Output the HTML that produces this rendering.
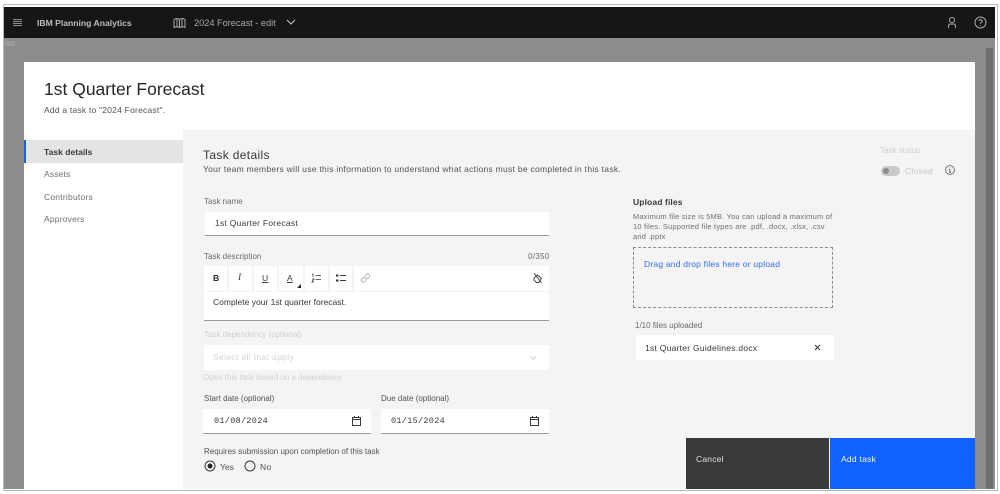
<!DOCTYPE html>
<html><head><meta charset="utf-8"><style>
html,body{margin:0;padding:0;background:#fff}
body{width:1000px;height:494px;position:relative;overflow:hidden;font-family:"Liberation Sans",sans-serif;color:#393939}
div,span.a,svg{position:absolute}
.t{white-space:nowrap;line-height:12px}
.l{font-size:8px;color:#6a6a6a;letter-spacing:0}
.d{font-size:8px;color:#d0d0d0;letter-spacing:0}
.f{background:#fff}
#w{left:0;top:0;width:1000px;height:494px;filter:blur(.3px);overflow:hidden}
</style></head><body><div id="w">
<div style="left:3px;top:4px;width:995px;height:487px;background:#b8b8b8"></div>
<div style="left:4px;top:5px;width:993px;height:485px;background:#fff"></div>
<div style="left:4px;top:7px;width:991px;height:482px;background:#8c8c8c"></div>
<div style="left:4px;top:7px;width:991px;height:31px;background:#161616"></div>
<div style="left:986px;top:48px;width:7px;height:441px;background:#6f6f6f"></div>
<svg style="left:13px;top:18px" width="9" height="9" viewBox="0 0 9 9"><path d="M0 1.500H9M0 3.500H9M0 5.500H9M0 7.500H9" stroke="#8d8d8d" stroke-width="1"/></svg>
<div class="t" style="left:37px;top:17px;font-size:8.600px;font-weight:bold;color:#bdbdbd">IBM Planning Analytics</div>
<svg style="left:173px;top:17px" width="13" height="12" viewBox="0 0 13 12" fill="none" stroke="#a8a8a8"><path d="M1 2.500C3 1 4.500 1 6.500 2.500C8.500 1 10 1 12 2.500V10.500C10 9.500 8.500 9.500 6.500 10.500C4.500 9.500 3 9.500 1 10.500ZM4 2V10M6.500 2.500V10.500M9 2V10"/></svg>
<div class="t" style="left:194px;top:17px;font-size:9.200px;color:#a8a8a8">2024 Forecast - edit</div>
<svg style="left:286px;top:19px" width="10" height="7" viewBox="0 0 10 7" fill="none" stroke="#c6c6c6" stroke-width="1.100"><path d="M1 1L5 5L9 1"/></svg>
<svg style="left:946px;top:16px" width="12" height="13" viewBox="0 0 12 13" fill="none" stroke="#a8a8a8"><circle cx="6" cy="4" r="2.500"/><path d="M2.500 12V10C2.500 8.500 3.500 8 5 8H7C8.500 8 9.500 8.500 9.500 10V12"/></svg>
<svg style="left:974px;top:16px" width="13" height="13" viewBox="0 0 13 13" fill="none" stroke="#a8a8a8"><circle cx="6.500" cy="6.500" r="5.500"/><path d="M4.800 5C5 3.200 8.200 3.200 8.200 5C8.200 6.200 6.500 6.200 6.500 7.800M6.500 9V10"/></svg>
<div style="left:5px;top:41px;width:10px;height:5px;background:#9a9a9a"></div>

<div style="left:24px;top:62px;width:951px;height:427px;background:#fff"></div>
<div style="left:183px;top:130px;width:792px;height:359px;background:#f4f4f4"></div>
<div class="t" style="left:44px;top:79px;font-size:17.500px;line-height:20px;color:#262626">1st Quarter Forecast</div>
<div class="t" style="left:44px;top:104px;font-size:8.500px;color:#525252;letter-spacing:.22px">Add a task to "2024 Forecast".</div>

<div style="left:24px;top:140px;width:159px;height:23px;background:#e4e4e4"></div>
<div style="left:24px;top:140px;width:2px;height:23px;background:#0f62fe"></div>
<div class="t" style="left:44px;top:146px;font-size:8.500px;font-weight:bold;color:#393939;letter-spacing:.03px">Task details</div>
<div class="t" style="left:44px;top:168px;font-size:8.500px;color:#6f6f6f;letter-spacing:.15px">Assets</div>
<div class="t" style="left:44px;top:191px;font-size:8.500px;color:#6f6f6f;letter-spacing:.22px">Contributors</div>
<div class="t" style="left:44px;top:213px;font-size:8.500px;color:#6f6f6f;letter-spacing:.2px">Approvers</div>

<div class="t" style="left:203px;top:148px;font-size:12px;line-height:14px;color:#393939;letter-spacing:.35px">Task details</div>
<div class="t" style="left:203px;top:163px;font-size:8.500px;color:#525252;letter-spacing:.28px">Your team members will use this information to understand what actions must be completed in this task.</div>

<div class="t l" style="left:204px;top:196px">Task name</div>
<div class="f" style="left:205px;top:212px;width:344px;height:23px;border-bottom:1px solid #9a9a9a"></div>
<div class="t" style="left:215px;top:217px;font-size:8.500px;color:#393939;letter-spacing:.25px">1st Quarter Forecast</div>

<div class="t l" style="left:204px;top:251px">Task description</div>
<div class="t l" style="left:528px;top:251px;letter-spacing:.3px">0/350</div>
<div class="f" style="left:204px;top:266px;width:345px;height:25px"></div>
<div style="left:227px;top:266px;width:2px;height:25px;background:#f4f4f4"></div>
<div style="left:252px;top:266px;width:2px;height:25px;background:#f4f4f4"></div>
<div style="left:277px;top:266px;width:2px;height:25px;background:#f4f4f4"></div>
<div style="left:303px;top:266px;width:2px;height:25px;background:#f4f4f4"></div>
<div style="left:328px;top:266px;width:2px;height:25px;background:#f4f4f4"></div>
<div style="left:352px;top:266px;width:2px;height:25px;background:#f4f4f4"></div>
<div class="t" style="left:213px;top:272px;font-size:8.500px;font-weight:bold;color:#262626">B</div>
<div class="t" style="left:238px;top:272px;font-family:'Liberation Serif',serif;font-style:italic;font-size:9.500px;color:#393939">I</div>
<div class="t" style="left:262px;top:272px;font-size:8.500px;color:#393939;text-decoration:underline">U</div>
<div class="t" style="left:287px;top:272px;font-size:8.500px;color:#393939;text-decoration:underline">A</div>
<svg style="left:297px;top:284px" width="4" height="4"><path d="M4 0V4H0Z" fill="#222"/></svg>
<svg style="left:311px;top:273px" width="10" height="10" viewBox="0 0 10 10" fill="none" stroke="#393939"><path d="M4.500 2.500H10M4.500 6.500H10M1 1H2V4M1 6H3L1 9H3" stroke-width=".8"/></svg>
<svg style="left:336px;top:274px" width="10" height="8" viewBox="0 0 10 8"><path d="M0 0.500H2.500V2.500H0ZM0 5.500H2.500V7.500H0Z" fill="#393939"/><path d="M4 1.500H10M4 6.500H10" stroke="#393939"/></svg>
<svg style="left:360px;top:273px" width="11" height="10" viewBox="0 0 11 10" fill="none" stroke="#b5b5b5"><path d="M5 2.500L6.500 1.200C8 0 10.500 2 9.500 3.700L7.500 5.500C6.500 6.500 5.300 6 4.800 5.300M6 7.500L4.500 8.800C3 10 .5 8 1.500 6.300L3.500 4.500C4.500 3.500 5.700 4 6.200 4.700"/></svg>
<svg style="left:532px;top:272px" width="11" height="12" viewBox="0 0 11 12" fill="none" stroke="#393939" stroke-width=".9"><path d="M2 1L9.500 11M2 6L5.500 3L9.500 6.500L6.500 10.500H4.500L2 8Z"/></svg>
<div class="f" style="left:204px;top:292px;width:345px;height:28px;border-bottom:1px solid #9a9a9a"></div>
<div class="t" style="left:213px;top:296px;font-size:8.500px;color:#393939;letter-spacing:0">Complete your 1st quarter forecast.</div>

<div class="t d" style="left:204px;top:329px">Task dependency (optional)</div>
<div class="f" style="left:204px;top:345px;width:345px;height:25px"></div>
<div class="t" style="left:213px;top:351px;font-size:8.500px;color:#d4d4d4;letter-spacing:.35px">Select all that apply</div>
<svg style="left:529px;top:355px" width="8" height="5" fill="none" stroke="#cfcfcf"><path d="M1 1L4 4L7 1"/></svg>
<div class="t d" style="left:203px;top:372px">Open this task based on a dependency</div>

<div class="t l" style="left:204px;top:393px;color:#525252">Start date (optional)</div>
<div class="t l" style="left:381px;top:393px;color:#525252">Due date (optional)</div>
<div class="f" style="left:203px;top:409px;width:168px;height:24px;border-bottom:1px solid #9a9a9a"></div>
<div class="f" style="left:381px;top:409px;width:168px;height:24px;border-bottom:1px solid #9a9a9a"></div>
<div class="t" style="left:214px;top:415px;font-family:'Liberation Mono',monospace;font-size:8.500px;color:#393939;letter-spacing:.3px">01/08/2024</div>
<div class="t" style="left:391px;top:415px;font-family:'Liberation Mono',monospace;font-size:8.500px;color:#393939;letter-spacing:.3px">01/15/2024</div>
<svg style="left:352px;top:416px" width="9" height="10" viewBox="0 0 9 10" fill="none" stroke="#393939"><path d="M.5 1.500H8.500V9.500H.5ZM.5 3.500H8.500M2.500 0V2M6.500 0V2"/></svg>
<svg style="left:530px;top:416px" width="9" height="10" viewBox="0 0 9 10" fill="none" stroke="#393939"><path d="M.5 1.500H8.500V9.500H.5ZM.5 3.500H8.500M2.500 0V2M6.500 0V2"/></svg>

<div class="t l" style="left:204px;top:446px;color:#525252">Requires submission upon completion of this task</div>
<svg style="left:204px;top:460px" width="12" height="12" fill="none"><circle cx="6" cy="6" r="5" stroke="#393939"/><circle cx="6" cy="6" r="2.500" fill="#262626"/></svg>
<div class="t" style="left:220px;top:461px;font-size:8.500px;color:#525252">Yes</div>
<svg style="left:244px;top:460px" width="12" height="12" fill="none"><circle cx="6" cy="6" r="5" stroke="#393939"/></svg>
<div class="t" style="left:260px;top:461px;font-size:8.500px;color:#525252;letter-spacing:.3px">No</div>

<div class="t" style="left:633px;top:196px;font-size:8.500px;font-weight:bold;color:#393939;letter-spacing:.12px">Upload files</div>
<div class="t" style="left:633px;top:212px;font-size:7.500px;line-height:10px;color:#6f6f6f;letter-spacing:.19px">Maximum file size is 5MB. You can upload a maximum of<br>10 files. Supported file types are .pdf, .docx, .xlsx, .csv<br>and .pptx</div>
<div style="left:633px;top:247px;width:198px;height:59px;border:1px dashed #8d8d8d"></div>
<div class="t" style="left:644px;top:258px;font-size:8.500px;color:#2f6fed;letter-spacing:.21px">Drag and drop files here or upload</div>
<div class="t l" style="left:635px;top:320px">1/10 files uploaded</div>
<div class="f" style="left:636px;top:335px;width:198px;height:25px"></div>
<div class="t" style="left:645px;top:342px;font-size:8.500px;color:#393939;letter-spacing:.26px">1st Quarter Guidelines.docx</div>
<svg style="left:814px;top:344px" width="7" height="7" stroke="#393939" stroke-width="1"><path d="M1 1L6 6M6 1L1 6"/></svg>

<div class="t d" style="left:880px;top:145px">Task status</div>
<div style="left:881px;top:166px;width:19px;height:10px;border-radius:5px;background:#c9c9c9"></div>
<div style="left:883px;top:168px;width:6px;height:6px;border-radius:3px;background:#8d8d8d"></div>
<div class="t" style="left:905px;top:165px;font-size:8.500px;color:#c6c6c6;letter-spacing:.25px">Closed</div>
<svg style="left:945px;top:165px" width="10" height="10" viewBox="0 0 10 10" fill="none" stroke="#525252" stroke-width=".8"><circle cx="5" cy="5" r="4.400"/><path d="M4 4.500H5V7.500M4 7.500H6M5 2.500V3.300"/></svg>

<div style="left:686px;top:438px;width:143px;height:51px;background:#393939"></div>
<div style="left:830px;top:438px;width:145px;height:51px;background:#0f62fe"></div>
<div class="t" style="left:696px;top:453px;font-size:8.500px;color:#e0e0e0;letter-spacing:.2px">Cancel</div>
<div class="t" style="left:841px;top:453px;font-size:8.500px;color:#f4f4f4;letter-spacing:.25px">Add task</div>
</div></body></html>
